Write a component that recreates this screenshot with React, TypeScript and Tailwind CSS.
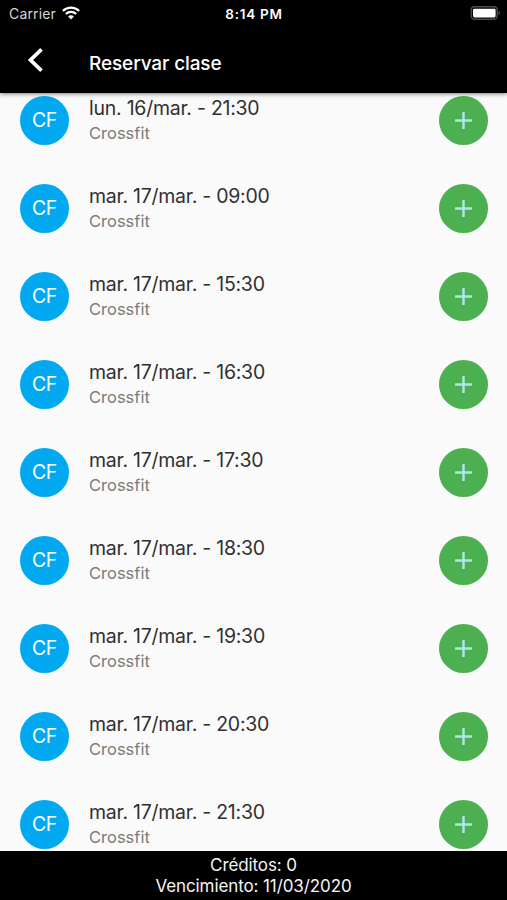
import React, { FC } from "react";

type ClassSlot = {
  date: string;
  name: string;
  initials: string;
};

const slots: ClassSlot[] = [
  { date: "lun. 16/mar. - 21:30", name: "Crossfit", initials: "CF" },
  { date: "mar. 17/mar. - 09:00", name: "Crossfit", initials: "CF" },
  { date: "mar. 17/mar. - 15:30", name: "Crossfit", initials: "CF" },
  { date: "mar. 17/mar. - 16:30", name: "Crossfit", initials: "CF" },
  { date: "mar. 17/mar. - 17:30", name: "Crossfit", initials: "CF" },
  { date: "mar. 17/mar. - 18:30", name: "Crossfit", initials: "CF" },
  { date: "mar. 17/mar. - 19:30", name: "Crossfit", initials: "CF" },
  { date: "mar. 17/mar. - 20:30", name: "Crossfit", initials: "CF" },
  { date: "mar. 17/mar. - 21:30", name: "Crossfit", initials: "CF" },
];

const WifiIcon: FC = () => (
  <svg width="18" height="14" viewBox="0 0 18 14" fill="none" className="-mt-[2px]">
    <path d="M0.9 5C5.4 0.6 12.6 0.6 17.1 5" stroke="white" strokeWidth="2.3" />
    <path d="M3.8 8C6.7 5.2 11.3 5.2 14.2 8" stroke="white" strokeWidth="2.2" />
    <path d="M9 13.5L6.1 10.4C7.7 8.9 10.3 8.9 11.9 10.4Z" fill="white" />
  </svg>
);

const BatteryIcon: FC = () => (
  <svg width="31" height="14" viewBox="0 0 31 14" fill="none" className="-mt-[2px]">
    <rect x="1.2" y="0.8" width="26" height="12.4" rx="3.4" stroke="#4c4c4c" strokeWidth="1.4" />
    <rect x="3" y="2.7" width="22.6" height="8.8" rx="1.4" fill="white" />
    <path d="M28.6 4.8C30.5 5.4 30.5 8.6 28.6 9.2Z" fill="#4c4c4c" />
  </svg>
);

const StatusBar: FC = () => (
  <div className="grid h-7 grid-cols-3 items-center pl-[9px] pr-[6px]">
    <div className="flex items-center gap-[6px]">
      <span className="text-[14px] leading-7 tracking-[0.15px] text-[#d6d6d6]">Carrier</span>
      <WifiIcon />
    </div>
    <span className="-ml-[2px] text-center text-[13.5px] font-semibold leading-7 tracking-[0.75px]">
      8:14 PM
    </span>
    <div className="flex justify-end">
      <BatteryIcon />
    </div>
  </div>
);

const Header: FC = () => (
  <header className="relative z-10 h-[93px] shrink-0 bg-black text-white shadow-[0_1px_4px_rgba(0,0,0,0.5)]">
    <StatusBar />
    <div className="flex h-[65px] items-center">
      <button type="button" aria-label="Volver" className="ml-[27px] w-[62px]">
        <svg width="17" height="26" viewBox="0 0 17 26" fill="none" className="-mt-px">
          <path d="M14.5 2.4L3.5 13L14.5 23.6" stroke="white" strokeWidth="3.7" />
        </svg>
      </button>
      <h1 className="pt-[7px] text-[19px] font-medium tracking-[-0.12px]">Reservar clase</h1>
    </div>
  </header>
);

const Row: FC<{ slot: ClassSlot }> = ({ slot }) => (
  <li className="flex h-[88px] items-center pl-[20px] pr-[19px]">
    <div className="flex size-[49px] items-center justify-center rounded-full bg-[#03a9f0] pt-px text-[19.5px] tracking-[-0.4px] text-white">
      {slot.initials}
    </div>
    <div className="ml-5 flex-1">
      <p className="text-[19.5px] leading-[27px] tracking-[-0.25px] text-[#303030]">{slot.date}</p>
      <p className="text-[16.5px] leading-[23px] text-[#7c7c7c]">{slot.name}</p>
    </div>
    <button
      type="button"
      aria-label="Reservar"
      className="flex size-[49px] items-center justify-center rounded-full bg-[#4caf50]"
    >
      <svg width="17" height="17" viewBox="0 0 17 17">
        <path d="M8.5 0V17M0 8.5H17" stroke="#b3e5ec" strokeWidth="2.4" />
      </svg>
    </button>
  </li>
);

export default function App() {
  return (
    <div className="flex h-[900px] w-[507px] flex-col overflow-hidden bg-[#fafafa] font-['Inter','Liberation_Sans',sans-serif]">
      <Header />
      <main className="min-h-0 flex-1 overflow-hidden">
        <ul className="-mt-[17px]">
          {slots.map((slot) => (
            <Row key={slot.date} slot={slot} />
          ))}
        </ul>
      </main>
      <footer className="h-[49px] shrink-0 bg-black pt-[4px] text-center text-[17px] leading-[21px] tracking-[-0.1px] text-[#f5f5f5]">
        <p>Créditos: 0</p>
        <p>Vencimiento: 11/03/2020</p>
      </footer>
    </div>
  );
}
